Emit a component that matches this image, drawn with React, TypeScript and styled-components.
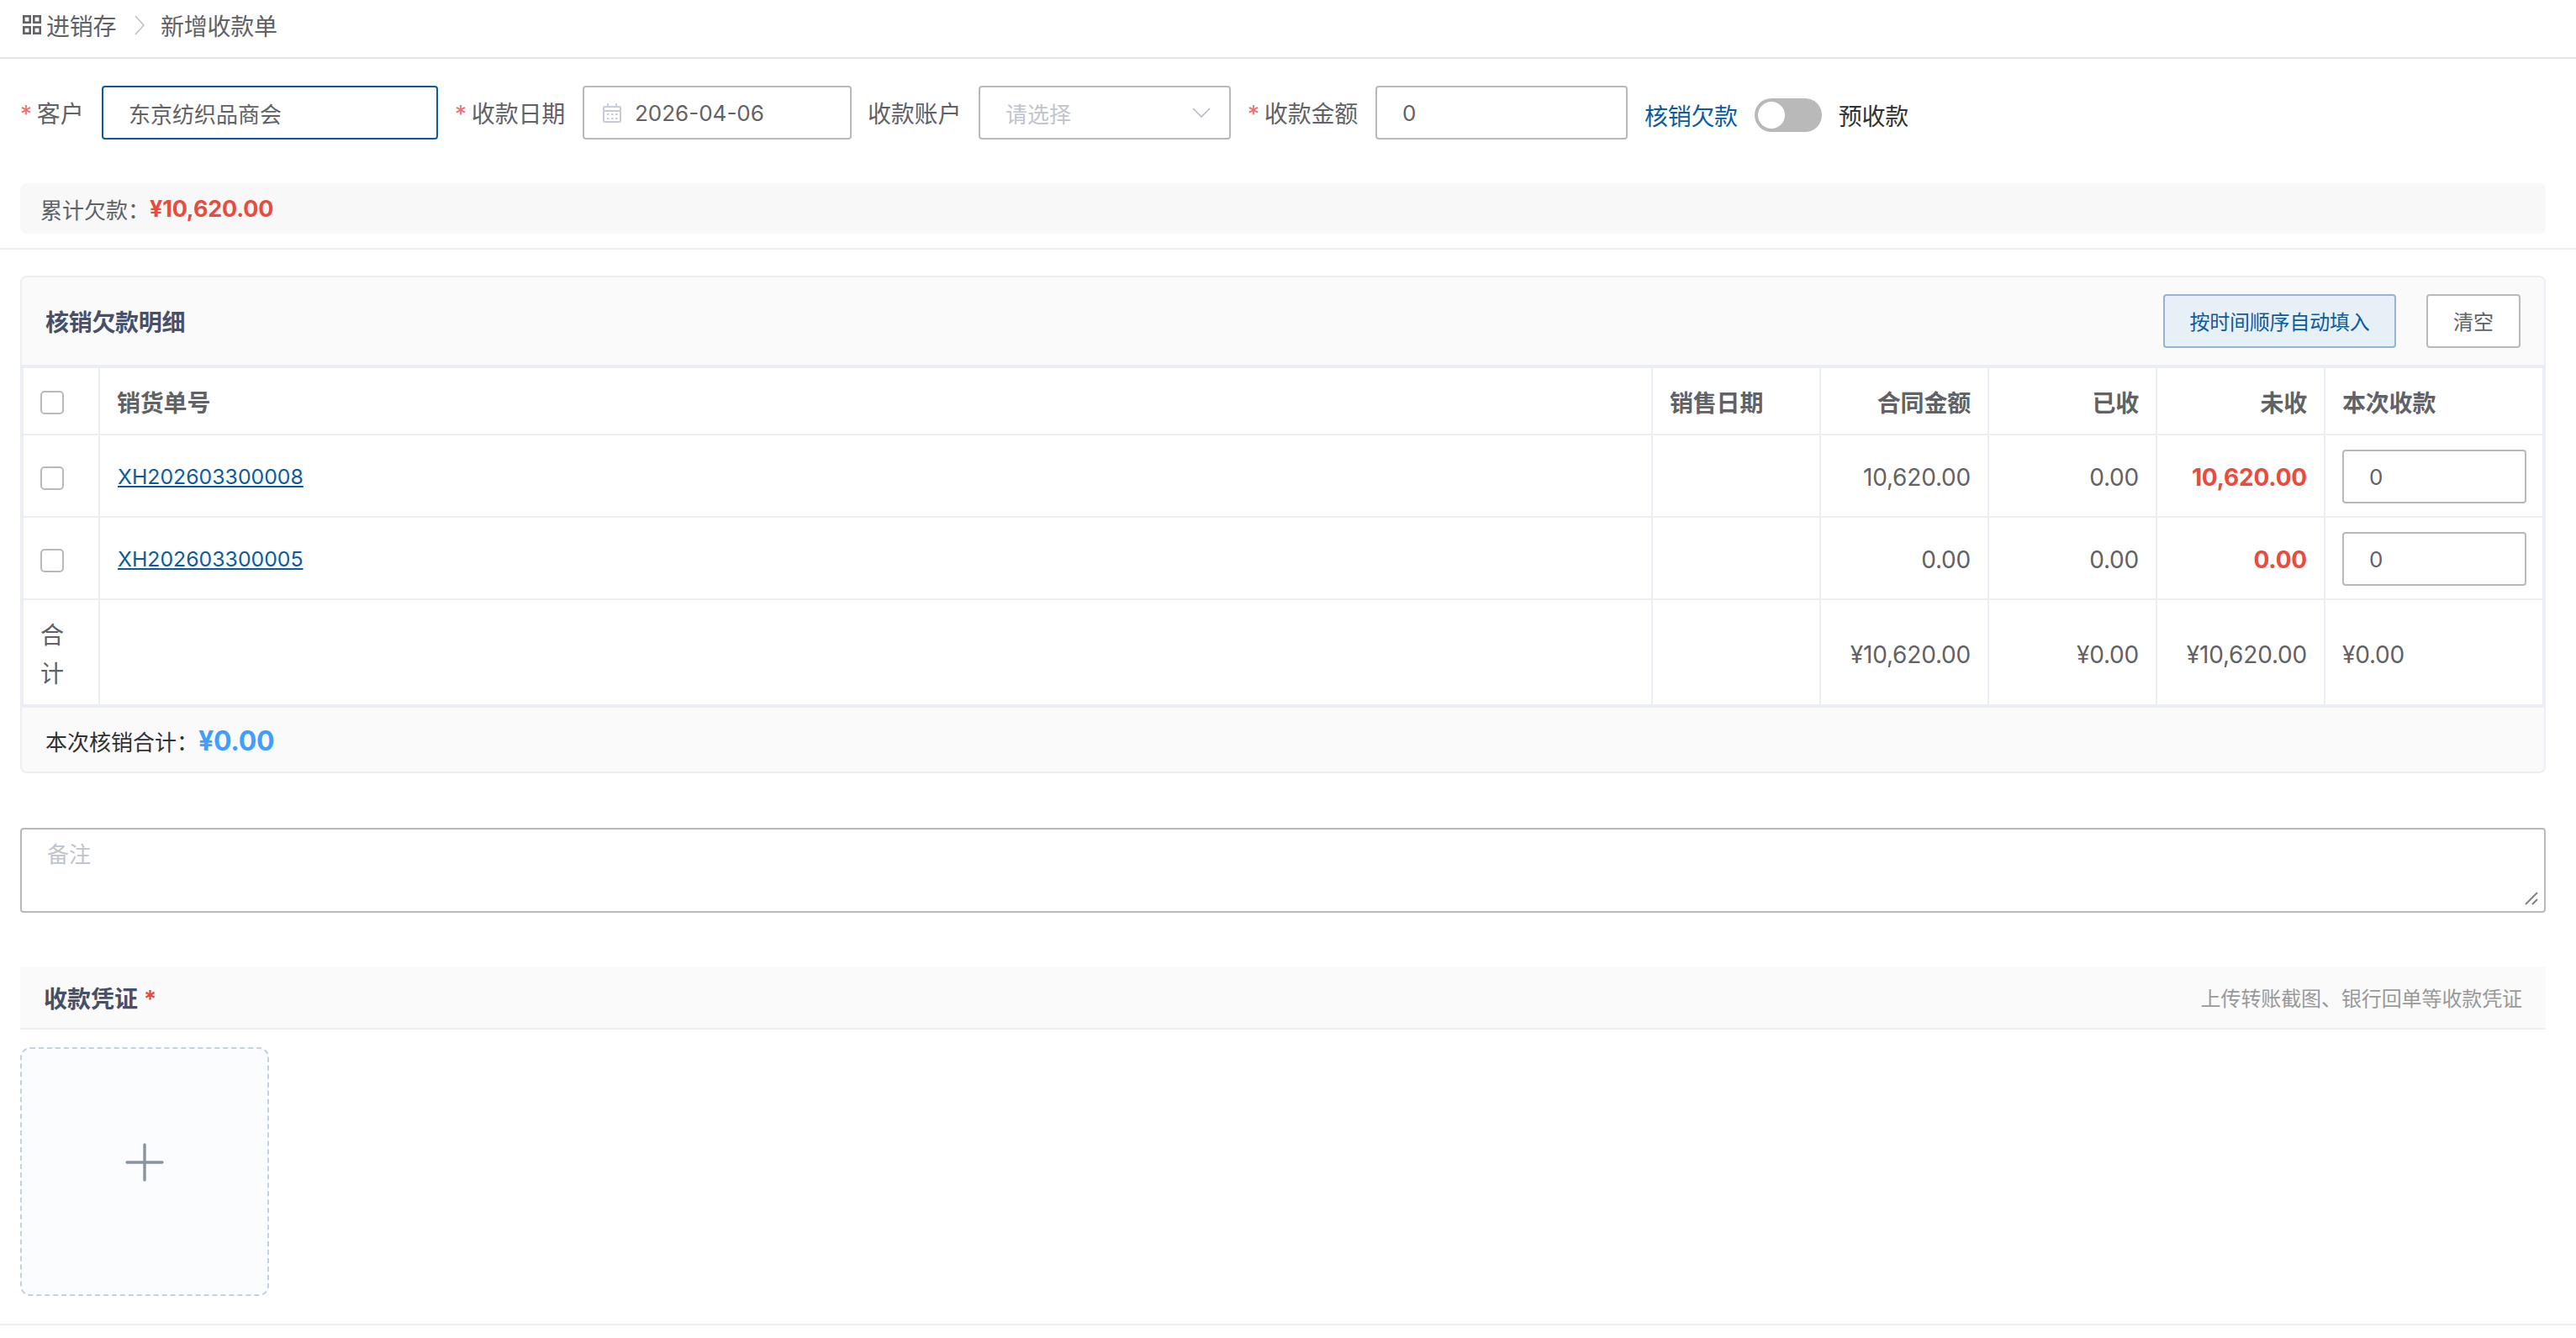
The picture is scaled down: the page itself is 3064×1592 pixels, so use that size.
import React from 'react';
import styled, { createGlobalStyle } from 'styled-components';

const FONT = 'Inter, "Noto Sans CJK SC", sans-serif';

const GlobalStyle = createGlobalStyle`
    * {
        box-sizing: border-box;
    }

    html, body {
        margin: 0;
        background: #fff;
        font-family: ${FONT};
    }
`;

const Color = {
    text: '#606266',
    dark: '#303133',
    title: '#475069',
    brand: '#0b5c9e',
    red: '#e74c3c',
    line: '#ebeef5',
    divider: '#efefef',
    control: '#b9b9b9',
    placeholder: '#c0c4cc',
    soft: '#fafafa',
};

const rows = [
    { no: 'XH202603300008', contract: '10,620.00', received: '0.00', unpaid: '10,620.00' },
    { no: 'XH202603300005', contract: '0.00', received: '0.00', unpaid: '0.00' },
];

export default function App() {
    return (
        <>
            <GlobalStyle />
            <Page>
                <Breadcrumb>
                    <GridIcon />
                    <CrumbText>进销存</CrumbText>
                    <CrumbArrow />
                    <CrumbText>新增收款单</CrumbText>
                </Breadcrumb>

                <FormRow>
                    <Label $required $width={97}>客户</Label>
                    <TextInput $width={400} $focused readOnly value="东京纺织品商会" />

                    <Label $required $width={152} $offset={20}>收款日期</Label>
                    <DateField>
                        <CalendarIcon />
                        <DateValue>2026-04-06</DateValue>
                    </DateField>

                    <Label $width={132} $offset={19}>收款账户</Label>
                    <SelectField>
                        <SelectPlaceholder>请选择</SelectPlaceholder>
                        <ChevronDown />
                    </SelectField>

                    <Label $required $width={152} $offset={20}>收款金额</Label>
                    <TextInput $width={300} readOnly value="0" />

                    <ModeLink>核销欠款</ModeLink>
                    <Toggle role="switch" aria-checked={false}>
                        <ToggleKnob />
                    </Toggle>
                    <ModeText>预收款</ModeText>
                </FormRow>

                <DebtBar>
                    累计欠款：<DebtAmount>¥10,620.00</DebtAmount>
                </DebtBar>
                <Divider $top={17} />

                <Panel>
                    <PanelHeader>
                        <PanelTitle>核销欠款明细</PanelTitle>
                        <PanelActions>
                            <PrimaryButton>按时间顺序自动填入</PrimaryButton>
                            <PlainButton>清空</PlainButton>
                        </PanelActions>
                    </PanelHeader>

                    <Table>
                        <colgroup>
                            <col style={{ width: 91 }} />
                            <col />
                            <col style={{ width: 200 }} />
                            <col style={{ width: 200 }} />
                            <col style={{ width: 200 }} />
                            <col style={{ width: 200 }} />
                            <col style={{ width: 258 }} />
                        </colgroup>
                        <thead>
                            <tr>
                                <HeadCell><Checkbox type="checkbox" /></HeadCell>
                                <HeadCell>销货单号</HeadCell>
                                <HeadCell>销售日期</HeadCell>
                                <HeadCell $right>合同金额</HeadCell>
                                <HeadCell $right>已收</HeadCell>
                                <HeadCell $right>未收</HeadCell>
                                <HeadCell>本次收款</HeadCell>
                            </tr>
                        </thead>
                        <tbody>
                            {rows.map(row => (
                                <tr key={row.no}>
                                    <BodyCell><Checkbox type="checkbox" /></BodyCell>
                                    <LinkCell><OrderLink href="#">{row.no}</OrderLink></LinkCell>
                                    <BodyCell />
                                    <BodyCell $right>{row.contract}</BodyCell>
                                    <BodyCell $right>{row.received}</BodyCell>
                                    <BodyCell $right><UnpaidText>{row.unpaid}</UnpaidText></BodyCell>
                                    <InputCell><CellInput readOnly value="0" /></InputCell>
                                </tr>
                            ))}
                            <tr>
                                <TotalCell>合计</TotalCell>
                                <TotalCell />
                                <TotalCell />
                                <TotalCell $right>¥10,620.00</TotalCell>
                                <TotalCell $right>¥0.00</TotalCell>
                                <TotalCell $right>¥10,620.00</TotalCell>
                                <TotalCell>¥0.00</TotalCell>
                            </tr>
                        </tbody>
                    </Table>

                    <PanelFooter>
                        本次核销合计：<FooterAmount>¥0.00</FooterAmount>
                    </PanelFooter>
                </Panel>

                <RemarkBox>
                    <Remark placeholder="备注" />
                    <ResizeGrip />
                </RemarkBox>

                <VoucherHeader>
                    <VoucherTitle>收款凭证 <RequiredMark>*</RequiredMark></VoucherTitle>
                    <VoucherHint>上传转账截图、银行回单等收款凭证</VoucherHint>
                </VoucherHeader>

                <UploadBox>
                    <PlusIcon />
                </UploadBox>
                <Divider $top={33} />
            </Page>
        </>
    );
}

const GridIcon = () => (
    <CrumbIcon viewBox="0 0 22 23" fill="none" stroke="#606266" strokeWidth="2.6">
        <rect x="1.3" y="1.3" width="7.4" height="7.4" />
        <rect x="13.3" y="1.3" width="7.4" height="7.4" />
        <rect x="1.3" y="14.3" width="7.4" height="7.4" />
        <rect x="13.3" y="14.3" width="7.4" height="7.4" />
    </CrumbIcon>
);

const CrumbArrow = () => (
    <ArrowSvg viewBox="0 0 12 24" fill="none" stroke="#bcc0c8" strokeWidth="1.6">
        <path d="M1 1 L11 12 L1 23" />
    </ArrowSvg>
);

const CalendarIcon = () => (
    <CalendarSvg viewBox="0 0 22 23" fill="none" stroke="#c8ccd4" strokeWidth="2">
        <rect x="1" y="4" width="20" height="18" rx="1" />
        <path d="M1 9h20M6 0v5M16 0v5" />
        <path d="M5 13h2.5M10 13h2.5M15 13h2.5M5 18h2.5M10 18h2.5M15 18h2.5" />
    </CalendarSvg>
);

const ChevronDown = () => (
    <ChevronSvg viewBox="0 0 22 12" fill="none" stroke="#b6bac4" strokeWidth="1.6">
        <path d="M1 1 L11 11 L21 1" />
    </ChevronSvg>
);

const ResizeGrip = () => (
    <GripSvg viewBox="0 0 16 16" fill="none" stroke="#808080" strokeWidth="2">
        <path d="M1 15 L15 1 M9 15 L15 9" />
    </GripSvg>
);

const PlusIcon = () => (
    <PlusSvg viewBox="0 0 46 46" fill="none" stroke="#8a93a3" strokeWidth="3.4" strokeLinecap="round">
        <path d="M23 2v42M2 23h42" />
    </PlusSvg>
);

const Page = styled.div`
    width: 3064px;
    min-height: 1592px;
    background: #fff;
    color: ${Color.text};
    font-size: 28px;
`;

const Breadcrumb = styled.div`
    display: flex;
    align-items: center;
    height: 70px;
    padding: 0 0 9px 27px;
    border-bottom: 2px solid #e4e4e4;
`;

const CrumbIcon = styled.svg`
    width: 22px;
    height: 23px;
    margin-right: 6px;
`;

const CrumbText = styled.span`
    font-size: 28px;
    letter-spacing: -0.3px;
    color: #606266;
`;

const ArrowSvg = styled.svg`
    width: 12px;
    height: 24px;
    margin: 0 19px 0 22px;
`;

const FormRow = styled.div`
    display: flex;
    align-items: center;
    height: 64px;
    margin-top: 32px;
    padding-left: 24px;
`;

const Label = styled.label<{ $required?: boolean; $width: number; $offset?: number }>`
    flex: none;
    width: ${props => props.$width}px;
    margin-left: ${props => props.$offset ?? 0}px;
    font-size: 28px;
    letter-spacing: -0.2px;
    color: ${Color.text};
    white-space: nowrap;

    ${props => props.$required && `
        &::before {
            content: '*';
            margin-right: 6px;
            color: #f56c6c;
        }
    `}
`;

const TextInput = styled.input<{ $width: number; $focused?: boolean }>`
    flex: none;
    width: ${props => props.$width}px;
    height: 64px;
    padding: 0 30px;
    border: 2px solid ${props => (props.$focused ? Color.brand : Color.control)};
    border-radius: 4px;
    outline: none;
    background: #fff;
    font-family: ${FONT};
    font-size: 26px;
    color: ${Color.text};
`;

const DateField = styled.div`
    display: flex;
    flex: none;
    align-items: center;
    width: 320px;
    height: 64px;
    padding-left: 22px;
    border: 2px solid ${Color.control};
    border-radius: 4px;
`;

const CalendarSvg = styled.svg`
    width: 22px;
    height: 23px;
    margin-right: 16px;
`;

const DateValue = styled.span`
    font-size: 26px;
    color: ${Color.text};
`;

const SelectField = styled.div`
    display: flex;
    flex: none;
    align-items: center;
    justify-content: space-between;
    width: 300px;
    height: 64px;
    padding: 0 22px 0 30px;
    border: 2px solid ${Color.control};
    border-radius: 4px;
`;

const SelectPlaceholder = styled.span`
    font-size: 26px;
    color: ${Color.placeholder};
`;

const ChevronSvg = styled.svg`
    width: 22px;
    height: 12px;
`;

const ModeLink = styled.span`
    margin: 6px 0 0 20px;
    font-size: 28px;
    letter-spacing: -0.3px;
    color: ${Color.brand};
`;

const Toggle = styled.div`
    display: flex;
    flex: none;
    align-items: center;
    width: 80px;
    height: 40px;
    margin: 6px 0 0 20px;
    padding: 4px;
    border-radius: 20px;
    background: #b9b9b9;
`;

const ToggleKnob = styled.span`
    width: 32px;
    height: 32px;
    border-radius: 50%;
    background: #fff;
`;

const ModeText = styled.span`
    margin: 6px 0 0 20px;
    font-size: 28px;
    letter-spacing: -0.3px;
    color: ${Color.dark};
`;

const DebtBar = styled.div`
    display: flex;
    align-items: center;
    width: 3004px;
    height: 60px;
    margin: 52px 0 0 24px;
    padding-left: 24px;
    border-radius: 8px;
    background: #f8f8f8;
    font-size: 26px;
`;

const DebtAmount = styled.span`
    font-size: 27px;
    font-weight: 700;
    letter-spacing: -0.2px;
    color: ${Color.red};
`;

const Divider = styled.div<{ $top: number }>`
    height: 2px;
    margin-top: ${props => props.$top}px;
    background: ${Color.divider};
`;

const Panel = styled.section`
    width: 3004px;
    margin: 31px 0 0 24px;
    border: 2px solid ${Color.line};
    border-radius: 8px;
    overflow: hidden;
`;

const PanelHeader = styled.div`
    display: flex;
    align-items: center;
    justify-content: space-between;
    height: 106px;
    padding: 0 28px;
    border-bottom: 2px solid ${Color.line};
    background: ${Color.soft};
`;

const PanelTitle = styled.h3`
    margin: 0;
    font-size: 28px;
    font-weight: 700;
    letter-spacing: -0.3px;
    color: ${Color.title};
`;

const PanelActions = styled.div`
    display: flex;
    gap: 36px;
`;

const PlainButton = styled.button`
    height: 64px;
    padding: 0 30px 2px;
    border: 2px solid ${Color.control};
    border-radius: 4px;
    background: #fff;
    font-family: ${FONT};
    font-size: 24px;
    color: ${Color.text};
`;

const PrimaryButton = styled(PlainButton)`
    padding: 0 29.4px 2px;
    border-color: #8fb6d8;
    background: #e7eff7;
    letter-spacing: -0.2px;
    color: ${Color.brand};
`;

const Table = styled.table`
    width: 100%;
    border-collapse: separate;
    border-spacing: 0;
    border: 2px solid ${Color.line};
    border-bottom: 0;
    table-layout: fixed;
`;

const HeadCell = styled.th<{ $right?: boolean }>`
    height: 80px;
    padding: 2px 20px 0;
    border-right: 2px solid ${Color.line};
    border-bottom: 2px solid ${Color.line};
    font-size: 28px;
    font-weight: 700;
    letter-spacing: -0.2px;
    color: ${Color.text};
    text-align: ${props => (props.$right ? 'right' : 'left')};

    &:last-child {
        border-right: 0;
    }
`;

const BodyCell = styled.td<{ $right?: boolean }>`
    height: 98px;
    padding: 4px 20px 0;
    border-right: 2px solid ${Color.line};
    border-bottom: 2px solid ${Color.line};
    font-size: 28px;
    letter-spacing: -0.2px;
    color: ${Color.text};
    text-align: ${props => (props.$right ? 'right' : 'left')};

    &:last-child {
        border-right: 0;
    }
`;

const LinkCell = styled(BodyCell)`
    padding-top: 0;
`;

const InputCell = styled(BodyCell)`
    padding-top: 2px;
`;

const TotalCell = styled(BodyCell)`
    height: 126px;
    padding-top: 6px;
    line-height: 46px;
`;

const Checkbox = styled.input`
    display: block;
    width: 28px;
    height: 28px;
    margin: 2px 0 0;
    border: 2px solid ${Color.control};
    border-radius: 5px;
    background: #fff;
    appearance: none;
`;

const OrderLink = styled.a`
    margin-left: 1px;
    font-size: 24.8px;
    letter-spacing: 0;
    color: ${Color.brand};
    text-decoration: underline;
`;

const UnpaidText = styled.span`
    font-weight: 700;
    color: ${Color.red};
`;

const CellInput = styled.input`
    display: block;
    width: 219px;
    height: 64px;
    padding: 0 30px;
    border: 2px solid ${Color.control};
    border-radius: 4px;
    outline: none;
    font-family: ${FONT};
    font-size: 26px;
    color: ${Color.text};
`;

const PanelFooter = styled.div`
    display: flex;
    align-items: center;
    height: 78px;
    padding: 3px 0 0 28px;
    border-top: 2px solid ${Color.line};
    background: ${Color.soft};
    font-size: 26px;
    color: ${Color.dark};
`;

const FooterAmount = styled.span`
    font-size: 32px;
    font-weight: 700;
    letter-spacing: -0.3px;
    color: #409eff;
`;

const RemarkBox = styled.div`
    position: relative;
    width: 3004px;
    height: 101px;
    margin: 65px 0 0 24px;
`;

const Remark = styled.textarea`
    display: block;
    width: 100%;
    height: 100%;
    padding: 9px 30px;
    border: 2px solid ${Color.control};
    border-radius: 4px;
    outline: none;
    resize: none;
    font-family: ${FONT};
    font-size: 26px;

    &::placeholder {
        color: ${Color.placeholder};
    }
`;

const GripSvg = styled.svg`
    position: absolute;
    right: 9px;
    bottom: 9px;
    width: 16px;
    height: 16px;
`;

const VoucherHeader = styled.div`
    display: flex;
    align-items: center;
    justify-content: space-between;
    width: 3004px;
    height: 75px;
    margin: 64px 0 0 24px;
    padding: 0 28px;
    border-bottom: 2px solid ${Color.line};
    background: ${Color.soft};
`;

const VoucherTitle = styled.h3`
    margin: 0;
    font-size: 28px;
    font-weight: 700;
    color: ${Color.title};
`;

const RequiredMark = styled.span`
    color: ${Color.red};
`;

const VoucherHint = styled.span`
    font-size: 24px;
    letter-spacing: -0.1px;
    color: #999;
`;

const UploadBox = styled.div`
    display: flex;
    align-items: center;
    justify-content: center;
    width: 296px;
    height: 296px;
    margin: 21px 0 0 24px;
    padding-bottom: 22px;
    border: 2px dashed #c4d2e0;
    border-radius: 12px;
    background: #fbfcfe;
`;

const PlusSvg = styled.svg`
    width: 46px;
    height: 46px;
`;
